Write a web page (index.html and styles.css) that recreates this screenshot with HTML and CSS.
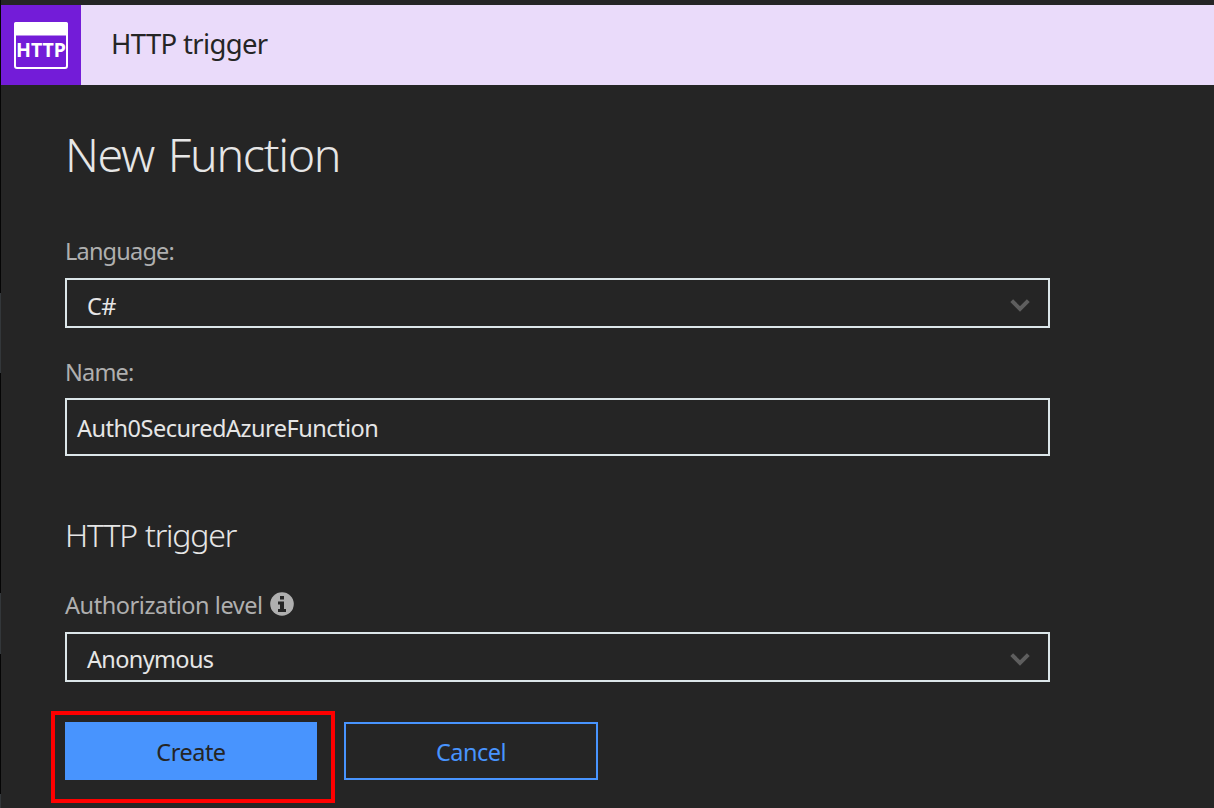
FILE: index.html
```html
<!DOCTYPE html>
<html lang="en">
<head>
<meta charset="utf-8">
<title>New Function</title>
<link rel="stylesheet" href="styles.css">
</head>
<body>
<div class="blade">
  <header class="header">
    <div class="header-icon">
      <svg width="80" height="80" viewBox="0 0 80 80" aria-hidden="true">
        <rect x="14" y="18" width="52" height="45" rx="2" fill="none" stroke="#fff" stroke-width="2"/>
        <path d="M13 30.500V19a2 2 0 0 1 2-2h50a2 2 0 0 1 2 2v11.500z" fill="#fff"/>
        <text class="icon-text" x="40" y="52" text-anchor="middle" textLength="50" lengthAdjust="spacingAndGlyphs">HTTP</text>
      </svg>
    </div>
    <div class="header-title">HTTP trigger</div>
  </header>
  <main class="form">
    <h1 class="title">New Function</h1>
    <div class="label label-language">Language:</div>
    <div class="field select">
      <span class="value-language">C#</span>
      <svg class="chevron" width="20" height="14" viewBox="0 0 20 14"><path d="M1.700 2.700L10 10.900l8.300-8.200" fill="none" stroke="#5e5e5e" stroke-width="4"/></svg>
    </div>
    <div class="label label-name">Name:</div>
    <div class="field input"><span class="value-name">Auth0SecuredAzureFunction</span></div>
    <h2 class="subtitle">HTTP trigger</h2>
    <div class="label label-auth"><span>Authorization level</span>
      <svg class="info" width="24" height="24" viewBox="0 0 24 24"><circle cx="12" cy="12" r="11.800" fill="#afafaf"/><path d="M10 4h4v3.500h-4zM8 9.500h6V17h2v3H8v-3h2v-4.500H8z" fill="#252525"/></svg>
    </div>
    <div class="field select">
      <span class="value-auth">Anonymous</span>
      <svg class="chevron" width="20" height="14" viewBox="0 0 20 14"><path d="M1.700 2.700L10 10.900l8.300-8.200" fill="none" stroke="#5e5e5e" stroke-width="4"/></svg>
    </div>
    <div class="actions">
      <div class="button primary">Create<span class="callout"></span></div>
      <div class="button secondary">Cancel</div>
    </div>
  </main>
</div>
</body>
</html>
```

FILE: styles.css
```css
* { box-sizing: border-box; }
body {
  margin: 0;
  height: 808px;
  overflow: hidden;
  background: #252525;
  color: #e6e6e6;
  font-family: "Noto Sans", "Open Sans", sans-serif;
  font-size: 23.5px;
  letter-spacing: -0.5px;
}
.blade {
  height: 808px;
  padding-top: 5px;
  border-left: 1px solid;
  border-image: linear-gradient(#050505 293px, #33373a 293px, #33373a 373px, #050505 373px, #050505 593px, #33373a 593px, #33373a 653px, #050505 653px, #050505 793px, #33373a 793px) 1;
}
.header { display: flex; height: 80px; background: #eadbfa; }
.header-icon { width: 80px; height: 80px; background: #731cd8; letter-spacing: 0; }
.header-icon svg { display: block; }
.icon-text { font-size: 19px; font-weight: 700; fill: #fff; }
.header-title {
  padding-left: 30px;
  line-height: 78px;
  font-size: 27.500px;
  letter-spacing: -0.65px;
  color: #252525;
}
.form { width: 1049px; padding: 37px 0 0 64px; }
.title {
  margin: 0 0 48px;
  font-size: 46.5px;
  line-height: 64px;
  font-weight: 260;
  letter-spacing: -1.3px;
  word-spacing: 3px;
}
.label { height: 34px; line-height: 34px; color: #afafaf; margin-bottom: 10px; }
.label-language { letter-spacing: -0.8px; }
.label-name { margin: 27px 0 9px; letter-spacing: -0.8px; }
.label-auth { display: flex; margin-top: 31px; letter-spacing: -0.45px; }
.info { margin: 4px 0 0 7px; }
.field {
  display: flex;
  align-items: center;
  justify-content: space-between;
  border: 2px solid #dce6e9;
}
.select { height: 50px; padding: 5px 18px 0 20px; }
.value-auth { margin-top: -1px; letter-spacing: -0.65px; }
.chevron { margin-top: -1px; }
.input { height: 58px; padding: 1px 10px 0; }
.subtitle {
  margin: 57px 0 0;
  font-size: 32px;
  line-height: 44px;
  font-weight: 280;
  letter-spacing: -1.2px;
  word-spacing: 1px;
}
.actions { display: flex; gap: 27px; margin-top: 40px; }
.button {
  position: relative;
  height: 58px;
  border: 2px solid #4894fe;
  padding-top: 1px;
  line-height: 54px;
  text-align: center;
}
.primary { width: 252px; background: #4894fe; color: #252525; }
.secondary { width: 254px; color: #4894fe; }
.callout {
  position: absolute;
  left: -16px;
  top: -13px;
  width: 284px;
  height: 92px;
  border: 4px solid #f00;
}
```
